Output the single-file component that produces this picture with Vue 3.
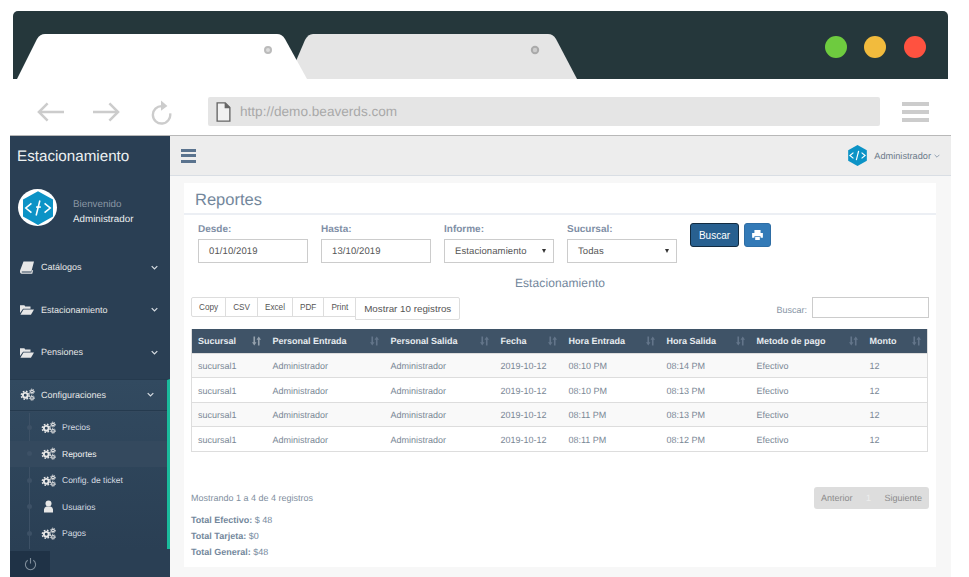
<script setup>
const menu = [
  { label: 'Catálogos', icon: 'book' },
  { label: 'Estacionamiento', icon: 'folder' },
  { label: 'Pensiones', icon: 'folder' },
]

const subMenu = [
  { label: 'Precios', icon: 'gears' },
  { label: 'Reportes', icon: 'gears', active: true },
  { label: 'Config. de ticket', icon: 'gears' },
  { label: 'Usuarios', icon: 'user' },
  { label: 'Pagos', icon: 'gears' },
]

const filters = [
  { label: 'Desde:', value: '01/10/2019' },
  { label: 'Hasta:', value: '13/10/2019' },
  { label: 'Informe:', value: 'Estacionamiento', select: true },
  { label: 'Sucursal:', value: 'Todas', select: true },
]

const columns = [
  { label: 'Sucursal', width: 75, sorted: true },
  { label: 'Personal Entrada', width: 118 },
  { label: 'Personal Salida', width: 110 },
  { label: 'Fecha', width: 68 },
  { label: 'Hora Entrada', width: 98 },
  { label: 'Hora Salida', width: 90 },
  { label: 'Metodo de pago', width: 113 },
  { label: 'Monto', width: 64 },
]

const rows = [
  ['sucursal1', 'Administrador', 'Administrador', '2019-10-12', '08:10 PM', '08:14 PM', 'Efectivo', '12'],
  ['sucursal1', 'Administrador', 'Administrador', '2019-10-12', '08:10 PM', '08:13 PM', 'Efectivo', '12'],
  ['sucursal1', 'Administrador', 'Administrador', '2019-10-12', '08:11 PM', '08:13 PM', 'Efectivo', '12'],
  ['sucursal1', 'Administrador', 'Administrador', '2019-10-12', '08:11 PM', '08:12 PM', 'Efectivo', '12'],
]

const exportButtons = ['Copy', 'CSV', 'Excel', 'PDF', 'Print']
</script>

<template>
  <div class="page">
    <svg class="chrome" viewBox="0 0 935 68" width="935" height="68">
      <path d="M0 68V5a5 5 0 0 1 5-5h925a5 5 0 0 1 5 5v63z" fill="#25373b" />
      <path d="M283 50 292 29Q295 23 300 23H535Q540 23 543 28L564 68H290z" fill="#e5e5e5" />
      <path d="M4 68 24 28Q27 23 32 23H264Q269 23 272 28L294 68z" fill="#fff" />
      <circle cx="255" cy="39" r="3" fill="#ddd" stroke="#bbb" stroke-width="2" />
      <circle cx="522" cy="39" r="3.2" fill="#ccc" stroke="#aaa" stroke-width="2" />
      <circle cx="823" cy="36" r="11" fill="#6ecb3f" />
      <circle cx="862" cy="36" r="11" fill="#f2bb3d" />
      <circle cx="902" cy="36" r="11" fill="#ff5240" />
    </svg>

    <div class="toolbar">
      <svg class="nav-arrow" viewBox="0 0 28 20" fill="none" stroke="#ccc" stroke-width="2.6">
        <path d="M28 10H2" /><path d="M11 1 2 10l9 9" />
      </svg>
      <svg class="nav-arrow" viewBox="0 0 28 20" fill="none" stroke="#ccc" stroke-width="2.6">
        <path d="M0 10h26" /><path d="M17 1l9 9-9 9" />
      </svg>
      <svg class="nav-reload" viewBox="0 0 24 26" fill="none" stroke="#ccc" stroke-width="2.6">
        <path d="M13 6a9.5 9.5 0 1 0 9 8" />
        <path d="M12 0l7 6-7 5z" fill="#ccc" stroke="none" />
      </svg>
      <div class="address">
        <svg class="file-icon" viewBox="0 0 16 22" fill="#f1f1f1" stroke="#666" stroke-width="1.5">
          <path d="M1 1h9l5 5v15H1z" /><path d="M10 1v5h5" fill="#666" />
        </svg>
        <span>http://demo.beaverds.com</span>
      </div>
      <div class="burger"><i></i><i></i><i></i></div>
    </div>

    <div class="app">
      <aside class="sidebar">
        <div class="brand">Estacionamiento</div>
        <div class="profile">
          <div class="avatar">
            <svg viewBox="0 0 32 36" width="30" height="34">
              <path d="M16 0 32 9v18l-16 9L0 27V9z" fill="#0c93c6" />
              <g fill="none" stroke="#fff" stroke-width="1.7">
                <path d="M9 13 3 18l6 5" /><path d="M23 13l6 5-6 5" /><path d="M18 10l-4 16" /><path d="M14 17h5" />
              </g>
            </svg>
          </div>
          <div class="profile-text">
            <span>Bienvenido</span>
            <strong>Administrador</strong>
          </div>
        </div>

        <ul class="menu">
          <li v-for="item in menu" :key="item.label" class="menu-item">
            <svg v-if="item.icon === 'book'" class="menu-icon" viewBox="0 0 16 14">
              <path d="M4 0h12l-3 11.5H2.5c-1 0-1 1.2 0 1.2H13l.8-2.7L15 10l-1 4H2C0 14-.3 12 .2 10z" fill="#e7e7e7" />
            </svg>
            <svg v-else class="menu-icon" viewBox="0 0 16 14">
              <path d="M0 2h5l1 1.5h6V6H3.5L0 11z" fill="#e7e7e7" /><path d="M4 7h12l-3.5 6H0.5z" fill="#e7e7e7" />
            </svg>
            <span>{{ item.label }}</span>
            <svg class="chevron" viewBox="0 0 10 6" fill="none" stroke="#d5dbe1" stroke-width="1.8"><path d="M1 1l4 4 4-4" /></svg>
          </li>
        </ul>

        <div class="config">
          <div class="menu-item config-head">
            <svg class="menu-icon gears" viewBox="0 0 20 16">
              <g fill="none" stroke="#e7e7e7">
                <circle cx="7" cy="9" r="3.2" stroke-width="2.6" />
                <circle cx="7" cy="9" r="5.3" stroke-width="2" stroke-dasharray="2.2 2" />
                <circle cx="16" cy="4" r="1.8" stroke-width="1.5" />
                <circle cx="16" cy="4" r="3.2" stroke-width="1.3" stroke-dasharray="1.3 1.2" />
                <circle cx="16" cy="12.5" r="1.8" stroke-width="1.5" />
                <circle cx="16" cy="12.5" r="3.2" stroke-width="1.3" stroke-dasharray="1.3 1.2" />
              </g>
            </svg>
            <span>Configuraciones</span>
            <svg class="chevron" viewBox="0 0 10 6" fill="none" stroke="#d5dbe1" stroke-width="1.8"><path d="M1 1l4 4 4-4" /></svg>
          </div>
          <ul class="submenu">
            <li v-for="sub in subMenu" :key="sub.label" class="sub-item" :class="{ active: sub.active }">
              <i class="dot"></i>
              <svg v-if="sub.icon === 'gears'" class="sub-icon" viewBox="0 0 20 16">
                <g fill="none" stroke="#e7e7e7">
                  <circle cx="7" cy="9" r="3.2" stroke-width="2.6" />
                  <circle cx="7" cy="9" r="5.3" stroke-width="2" stroke-dasharray="2.2 2" />
                  <circle cx="16" cy="4" r="1.8" stroke-width="1.5" />
                  <circle cx="16" cy="4" r="3.2" stroke-width="1.3" stroke-dasharray="1.3 1.2" />
                  <circle cx="16" cy="12.5" r="1.8" stroke-width="1.5" />
                  <circle cx="16" cy="12.5" r="3.2" stroke-width="1.3" stroke-dasharray="1.3 1.2" />
                </g>
              </svg>
              <svg v-else class="sub-icon" viewBox="0 0 20 16">
                <circle cx="10" cy="4" r="4" fill="#e7e7e7" /><path d="M4 16v-4q0-3 3-4h6q3 1 3 4v4z" fill="#e7e7e7" />
              </svg>
              <span>{{ sub.label }}</span>
            </li>
          </ul>
        </div>

        <div class="side-footer">
          <div class="power">
            <svg viewBox="0 0 14 14" width="13" height="13" fill="none" stroke="#7f8d9a" stroke-width="1.2">
              <path d="M4 2.5a5.5 5.5 0 1 0 6 0" /><path d="M7 0v6" />
            </svg>
          </div>
        </div>
      </aside>

      <main class="main">
        <header class="topbar">
          <div class="top-burger"><i></i><i></i><i></i></div>
          <div class="top-user">
            <svg viewBox="0 0 32 36" width="19" height="21">
              <path d="M16 0 32 9v18l-16 9L0 27V9z" fill="#0c93c6" />
              <g fill="none" stroke="#fff" stroke-width="2">
                <path d="M9 13 3 18l6 5" /><path d="M23 13l6 5-6 5" /><path d="M18 10l-4 16" />
              </g>
            </svg>
            <span>Administrador</span>
            <svg class="top-caret" viewBox="0 0 10 6" fill="none" stroke="#73879c" stroke-width="1.2"><path d="M1 1l4 4 4-4" /></svg>
          </div>
        </header>

        <div class="content">
          <section class="card">
            <h1 class="card-title">Reportes</h1>

            <div class="filters">
              <label v-for="f in filters" :key="f.label" class="field">
                <span>{{ f.label }}</span>
                <div class="control" :class="{ select: f.select }">
                  {{ f.value }}
                  <i v-if="f.select" class="select-arrow"></i>
                </div>
              </label>
              <div class="actions">
                <button class="btn-search" type="button">Buscar</button>
                <button class="btn-print" type="button">
                  <svg viewBox="0 0 14 13" width="11" height="10">
                    <path d="M3 0h8v4H3z M0 4h14v6h-3V8H3v2H0z M4 9h6v4H4z" fill="#fff" />
                  </svg>
                </button>
              </div>
            </div>

            <h2 class="report-title">Estacionamiento</h2>

            <div class="table-tools">
              <div class="export">
                <button v-for="b in exportButtons" :key="b" type="button">{{ b }}</button>
                <button class="show-count" type="button">Mostrar 10 registros</button>
              </div>
              <div class="search">
                <span>Buscar:</span>
                <div class="search-input"></div>
              </div>
            </div>

            <table class="report">
              <colgroup>
                <col v-for="c in columns" :key="c.label" :style="{ width: c.width + 'px' }" />
              </colgroup>
              <thead>
                <tr>
                  <th v-for="c in columns" :key="c.label">
                    {{ c.label }}
                    <svg class="sort" :class="{ sorted: c.sorted }" viewBox="0 0 10 10">
                      <path d="M2.5 10 0 6.500h1.600V0h1.800v6.500H5zM7.500 0 10 3.500H8.400V10H6.600V3.500H5z" />
                    </svg>
                  </th>
                </tr>
              </thead>
              <tbody>
                <tr v-for="(row, i) in rows" :key="i">
                  <td v-for="(cell, j) in row" :key="j">{{ cell }}</td>
                </tr>
              </tbody>
            </table>

            <div class="table-foot">
              <span>Mostrando 1 a 4 de 4 registros</span>
              <div class="pagination">
                <span>Anterior</span>
                <span class="current">1</span>
                <span>Siguiente</span>
              </div>
            </div>

            <div class="totals">
              <p><b>Total Efectivo:</b> $ 48</p>
              <p><b>Total Tarjeta:</b> $0</p>
              <p><b>Total General:</b> $48</p>
            </div>
          </section>
        </div>
      </main>
    </div>
  </div>
</template>

<style>
html, body { margin: 0; background: #fff; }
</style>

<style scoped>
* { box-sizing: border-box; }
.page { width: 969px; height: 577px; overflow: hidden; background: #fff; font-family: "Liberation Sans", Arial, sans-serif; color: #73879c; text-rendering: geometricPrecision; }
.chrome { display: block; margin: 11px 0 0 13px; }

.toolbar { height: 56px; margin-left: 37px; width: 892px; display: flex; align-items: center; padding-top: 9px; }
.nav-arrow { width: 27px; height: 20px; margin-right: 29px; }
.nav-reload { width: 22px; height: 25px; margin-left: 1px; margin-right: 36px; margin-top: 2px; }
.address { width: 672px; height: 29px; background: #e5e5e5; border-radius: 2px; display: flex; align-items: center; padding-left: 8px; font-size: 13.6px; color: #a9a9a9; }
.file-icon { width: 15px; height: 20px; margin-right: 9px; }
.burger { margin-left: 22px; width: 27px; display: flex; flex-direction: column; gap: 4px; }
.burger i { display: block; height: 4px; background: #ccc; }

.app { margin-left: 10px; width: 941px; height: 442px; display: flex; border-top: 1px solid #b8b8b8; }

.sidebar { width: 160px; flex: none; background: #2a3f54; display: flex; flex-direction: column; color: #e7e7e7; }
.brand { font-size: 15.2px; color: #ecf0f1; padding: 13px 7px 0; line-height: 16px; height: 38px; }
.profile { display: flex; align-items: center; padding-left: 8px; height: 37px; margin-top: 15px; }
.avatar { width: 39px; height: 37px; border-radius: 50%; background: #fff; display: flex; align-items: center; justify-content: center; flex: none; }
.profile-text { margin-left: 16px; display: flex; flex-direction: column; gap: 4px; font-size: 9.8px; margin-top: 11px; }
.profile-text span { color: #8a97a4; line-height: 10px; }
.profile-text strong { font-weight: 400; color: #ecf0f1; line-height: 12px; }

.menu { list-style: none; margin: 20px 0 0; padding: 0; }
.menu-item { height: 42.5px; display: flex; align-items: center; font-size: 9px; color: #e7e7e7; padding-left: 10px; position: relative; }
.menu-icon { width: 14px; height: 13px; margin-right: 7px; flex: none; }
.menu-item span { flex: 1; }
.chevron { width: 7px; height: 5px; margin-right: 12px; flex: none; }

.config { margin-top: 5px; height: 170px; flex: none; border-right: 3px solid #1abb9c; background: linear-gradient(#324a60, #2a3f54); border-top: 1px solid #253a4e; }
.config-head { height: 31px; border-bottom: 1px solid #253a4e; box-shadow: 0 1px 0 #34495e; }
.config-head .menu-icon.gears { width: 15px; height: 13px; margin-right: 6px; }
.config-head .chevron { margin-right: 13px; }
.submenu { list-style: none; margin: 0; padding: 3.5px 0 0; position: relative; height: 138px; }
.submenu::before { content: ""; position: absolute; left: 19px; top: 2px; bottom: 0; width: 1px; background: #3d5166; }
.sub-item { height: 26.5px; display: flex; align-items: center; font-size: 8.5px; color: #d5dbe1; padding-left: 16.5px; position: relative; }
.sub-item.active { background: #34495e; color: #f2f2f2; }
.dot { width: 5px; height: 5px; border-radius: 50%; background: #3d5166; flex: none; margin-right: 9.5px; }
.sub-icon { width: 15px; height: 13px; margin-right: 6px; flex: none; }

.side-footer { margin-top: auto; height: 26px; flex: none; }
.power { width: 40px; height: 100%; background: #1f3246; display: flex; align-items: center; justify-content: center; }

.main { flex: 1; display: flex; flex-direction: column; min-width: 0; background: #f7f7f7; }
.topbar { height: 40px; flex: none; background: #ededed; border-bottom: 1px solid #d9dee4; display: flex; align-items: center; justify-content: space-between; padding: 0 11px; }
.top-burger { width: 15px; display: flex; flex-direction: column; gap: 2.5px; }
.top-burger i { display: block; height: 3px; background: #5a738e; }
.top-user { display: flex; align-items: center; font-size: 9.2px; color: #6b7a89; }
.top-user span { margin-left: 7px; }
.top-caret { width: 6px; height: 4px; margin-left: 3px; }

.content { flex: 1; padding: 7px 15px 10px 14px; min-height: 0; }
.card { background: #fff; height: 100%; display: flex; flex-direction: column; }
.card-title { margin: 0; height: 32px; border-bottom: 2px solid #eceff4; font-size: 16.5px; font-weight: 400; line-height: 34px; padding-left: 11px; color: #73879c; }

.filters { display: flex; gap: 13.5px; padding: 9px 0 0 14px; height: 51px; }
.field { display: flex; flex-direction: column; width: 109.5px; font-size: 10px; font-weight: 700; color: #7f8fa6; }
.field span { line-height: 12px; }
.control { margin-top: 3px; height: 24px; border: 1px solid #ccc; font-size: 9.5px; font-weight: 400; color: #555; line-height: 24px; padding-left: 10px; letter-spacing: 0.1px; position: relative; }
.select-arrow { position: absolute; right: 7px; top: 9px; border-left: 2.5px solid transparent; border-right: 2.5px solid transparent; border-top: 4px solid #333; }
.actions { display: flex; gap: 5px; align-items: flex-start; margin-top: -1px; }
.btn-search { width: 49px; height: 24px; background: #286090; border: 1px solid #122b40; border-radius: 3px; color: #fff; font: 10px "Liberation Sans", Arial, sans-serif; padding: 0; }
.btn-print { width: 27px; height: 24px; background: #337ab7; border: 1px solid #2e6da4; border-radius: 3px; padding: 0; display: flex; align-items: center; justify-content: center; }

.report-title { margin: 10px 0 0; font-size: 12px; font-weight: 400; line-height: 14px; text-align: center; color: #73879c; letter-spacing: 0.1px; }

.table-tools { display: flex; justify-content: space-between; padding: 7px 7px 0 7px; height: 39px; }
.export { display: flex; align-items: flex-start; }
.export button { height: 20px; padding: 0 7px; margin: 0 0 0 -1px; background: #fff; border: 1px solid #ddd; font: 8.2px "Liberation Sans", Arial, sans-serif; color: #555; }
.export button:first-child { margin-left: 0; border-radius: 2px 0 0 2px; }
.export .show-count { height: 23px; width: 105px; padding: 0; font-size: 9.8px; border-radius: 0 2px 2px 0; }
.search { display: flex; align-items: flex-start; font-size: 9px; color: #8593a3; }
.search span { line-height: 26px; margin-right: 5px; }
.search-input { width: 117px; height: 21px; border: 1px solid #ccc; }

.report { margin-left: 7px; width: 736px; table-layout: fixed; border-collapse: collapse; border-bottom: 1px solid #ddd; border-left: 1px solid #ddd; border-right: 1px solid #ddd; }
.report th { background: #3f5367; height: 24px; color: #e7ecf0; font-size: 9px; font-weight: 700; text-align: left; padding: 0 0 0 6px; position: relative; }
.sort { position: absolute; right: 6px; top: 7px; width: 9px; height: 10px; fill: #63758a; }
.sort.sorted { fill: #95a1ad; }
.report td { height: 24.5px; font-size: 9px; padding: 2px 0 0 6px; color: #7a8896; border-top: 1px solid #ddd; white-space: nowrap; }
.report tbody tr:nth-child(odd) td { background: #f9f9f9; }

.table-foot { display: flex; justify-content: space-between; align-items: center; padding: 35px 7px 0 7px; font-size: 9px; color: #7f8fa0; }
.pagination { width: 115px; height: 22px; background: #ddd; border-radius: 3px; display: flex; align-items: center; justify-content: space-between; padding: 0 7px; color: #8b8b8b; font-size: 9px; }
.current { color: #eee; }

.totals { padding: 3px 7px 0; font-size: 9px; color: #73879c; }
.totals p { margin: 0; line-height: 16px; }
.totals b { font-weight: 700; }
</style>
